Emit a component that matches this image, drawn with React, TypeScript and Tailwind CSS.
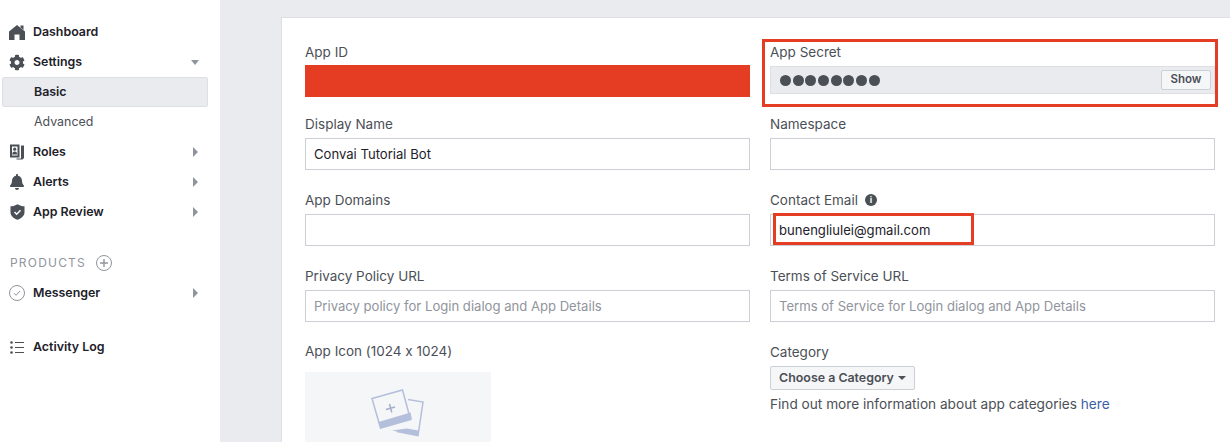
import { FaBell, FaCog } from 'react-icons/fa';

function CaretRight() {
  return <span className="h-0 w-0 border-y-[5px] border-l-[5px] border-y-transparent border-l-[#90949c]" />;
}

function CaretDown() {
  return <span className="h-0 w-0 border-x-[4.5px] border-t-[5px] border-x-transparent border-t-[#90949c]" />;
}

function HomeIcon() {
  return (
    <svg width="16" height="15" viewBox="0 0 16 15" fill="#4b4f56">
      <path d="M8 0l8 6.500V15h-5.500V9.500h-5V15H0V6.500z" />
      <path d="M11.500.5h3v4.500l-3-2.500z" />
    </svg>
  );
}

function RolesIcon() {
  return (
    <svg width="16" height="16" viewBox="0 0 16 16" fill="#4b4f56">
      <path d="M1 .5h9.500v13H1zM3 2.500v9h5.500v-9z" fillRule="evenodd" />
      <circle cx="5.700" cy="5.200" r="1.600" />
      <path d="M3.200 10.500c0-2 1-3 2.500-3s2.500 1 2.500 3z" />
      <path d="M12 1.500h3v12.500l-1.500 1.500H7.500v-1h4.500z" />
    </svg>
  );
}

function ShieldIcon() {
  return (
    <svg width="15" height="16" viewBox="0 0 15 16">
      <path d="M7.500.2C9.500 1.500 12 2.200 14.500 2.300v6c0 3.500-3 6-7 7.500-4-1.500-7-4-7-7.500v-6C3 2.200 5.500 1.500 7.500.2z" fill="#4b4f56" />
      <path d="M4.500 8l2.200 2.200 3.800-4" fill="none" stroke="#fff" strokeWidth="1.500" />
    </svg>
  );
}

function CheckCircle() {
  return (
    <svg width="16" height="16" viewBox="0 0 16 16" fill="none" stroke="#90949c">
      <circle cx="8" cy="8" r="7.500" />
      <path d="M5 8.200l2.100 2.100 4-4.300" />
    </svg>
  );
}

function ListIcon() {
  return (
    <svg width="14" height="13" viewBox="0 0 14 13" fill="#4b4f56">
      <circle cx="1.500" cy="1.500" r="1.300" />
      <circle cx="1.500" cy="6.500" r="1.300" />
      <circle cx="1.500" cy="11.500" r="1.300" />
      <path d="M5 1h9v1.100H5zM5 6h9v1.100H5zM5 11h9v1.100H5z" />
    </svg>
  );
}

function PictureIcon() {
  return (
    <svg width="54" height="50" viewBox="0 0 54 50" fill="none">
      <path d="M37 10.500l15 2.500-5 33.500-21-4" stroke="#b4bfdc" strokeWidth="1.500" />
      <path d="M21 41.500l26 5 .7-5-12-2z" fill="#b4bfdc" />
      <path d="M1 9.500L31.500 1l8 29.500L9.500 39z" stroke="#b4bfdc" strokeWidth="1.500" fill="#f5f6f7" />
      <path d="M7.500 33l32-9.500 1.500 7L9.500 39.500z" fill="#b4bfdc" />
      <path d="M15 20.500l9-2.500M18.500 15l2.300 8.500" stroke="#a3aecb" strokeWidth="1.500" />
    </svg>
  );
}

const navItems = [
  { label: 'Roles', icon: <RolesIcon /> },
  { label: 'Alerts', icon: <FaBell size={16} color="#4b4f56" /> },
  { label: 'App Review', icon: <ShieldIcon /> },
];

function NavRow({ icon, label, caret }: { icon: React.ReactNode; label: string; caret?: React.ReactNode }) {
  return (
    <div className="flex h-[30px] items-center pl-[9px] pr-[20px]">
      <span className="flex w-[16px] justify-center">{icon}</span>
      <span className="ml-[8px] flex-1 text-[12.4px] font-semibold text-[#1d2129]">{label}</span>
      <span className="flex w-[10px] justify-center">{caret}</span>
    </div>
  );
}

function Sidebar() {
  return (
    <aside className="h-[442px] w-[220px] shrink-0 bg-white pt-[17px]">
      <NavRow icon={<HomeIcon />} label="Dashboard" />
      <NavRow icon={<FaCog size={17} color="#4b4f56" />} label="Settings" caret={<CaretDown />} />
      <div className="ml-[2px] flex h-[30px] w-[206px] items-center rounded-[2px] border border-[#dddfe2] bg-[#e9ebee] pl-[31px] text-[12.4px] font-semibold text-[#1d2129]">
        Basic
      </div>
      <div className="flex h-[30px] items-center pl-[34px] text-[12.4px] text-[#4b4f56]">Advanced</div>
      {navItems.map((item) => (
        <NavRow key={item.label} icon={item.icon} label={item.label} caret={<CaretRight />} />
      ))}
      <div className="mt-[28px] flex h-[16px] items-center pl-[10px]">
        <span className="text-[12px] tracking-[1.2px] text-[#90949c]">PRODUCTS</span>
        <span className="ml-[10px] flex h-[16px] w-[16px] items-center justify-center rounded-full border border-[#90949c]">
          <svg width="8" height="8" viewBox="0 0 8 8" stroke="#90949c" strokeWidth="1.400">
            <path d="M0 4h8M4 0v8" />
          </svg>
        </span>
      </div>
      <div className="mt-[7px]">
        <NavRow icon={<CheckCircle />} label="Messenger" caret={<CaretRight />} />
      </div>
      <div className="mt-[24px]">
        <NavRow icon={<ListIcon />} label="Activity Log" />
      </div>
    </aside>
  );
}

function Label({ children }: { children: React.ReactNode }) {
  return <div className="text-[13.5px] leading-[20px] text-[#4b4f56]">{children}</div>;
}

function TextField({ value, placeholder }: { value?: string; placeholder?: string }) {
  return (
    <div className="mt-[4px] flex h-[32px] items-center border border-[#ccd0d5] bg-white px-[8px] pt-[1px] text-[13.1px]">
      {value ? <span className="text-[#1d2129]">{value}</span> : <span className="text-[#90949c]">{placeholder}</span>}
    </div>
  );
}

function Field({ label, value, placeholder }: { label: string; value?: string; placeholder?: string }) {
  return (
    <div>
      <Label>{label}</Label>
      <TextField value={value} placeholder={placeholder} />
    </div>
  );
}

export default function App() {
  return (
    <div className="flex h-[442px] w-[1230px] overflow-hidden bg-[#e9ebee] font-['Inter',sans-serif] [font-feature-settings:'calt'_0]">
      <Sidebar />
      <main className="ml-[61px] mt-[17px] flex-1 border-l border-t border-[#dddfe2] bg-white pl-[23px] pr-[15px] pt-[24px]">
        <div className="grid grid-cols-[445px_445px] gap-x-[20px] gap-y-[20px]">
          <div>
            <Label>App ID</Label>
            <div className="mt-[3px] h-[32px] bg-[#e53d23]" />
          </div>
          <div className="relative">
            <Label>App Secret</Label>
            <div className="mt-[4px] flex h-[28px] items-center justify-between border border-[#dddfe2] bg-[#e9ebee] pl-[9px] pr-[3px]">
              <span className="flex gap-[1.700px]">
                {[0, 1, 2, 3, 4, 5, 6, 7].map((dot) => (
                  <span key={dot} className="h-[11px] w-[11px] rounded-full bg-[#4b4f56]" />
                ))}
              </span>
              <span className="flex h-[20px] w-[50px] items-center justify-center rounded-[2px] border border-[#ccd0d5] bg-[#f5f6f7] text-[11.5px] font-semibold text-[#4b4f56]">
                Show
              </span>
            </div>
            <div className="absolute left-[-8px] top-[-3px] h-[68px] w-[456px] border-[3px] border-[#e53d23]" />
          </div>

          <div className="-mt-[3px]">
            <Field label="Display Name" value="Convai Tutorial Bot" />
          </div>
          <div className="-mt-[3px]">
            <Field label="Namespace" />
          </div>

          <Field label="App Domains" />
          <div className="relative">
            <div className="flex items-center gap-[7px]">
              <Label>Contact Email</Label>
              <span className="flex h-[12px] w-[12px] items-center justify-center rounded-full bg-[#4b4f56] text-[9px] font-bold text-white">
                i
              </span>
            </div>
            <TextField value="bunengliulei@gmail.com" />
            <div className="absolute left-[3px] top-[23px] h-[32px] w-[201px] border-[3px] border-[#e53d23]" />
          </div>

          <Field label="Privacy Policy URL" placeholder="Privacy policy for Login dialog and App Details" />
          <Field label="Terms of Service URL" placeholder="Terms of Service for Login dialog and App Details" />

          <div className="-mt-[1px]">
            <Label>App Icon (1024 x 1024)</Label>
            <div className="mt-[11px] flex h-[70px] w-[186px] items-start justify-center bg-[#f5f6f7] pt-[17px]">
              <PictureIcon />
            </div>
          </div>
          <div>
            <Label>Category</Label>
            <div className="mt-[4px] flex h-[24px] w-[145px] items-center justify-center gap-[4px] rounded-[2px] border border-[#ccd0d5] bg-[#f5f6f7] text-[12.4px] font-semibold text-[#4b4f56]">
              Choose a Category
              <span className="h-0 w-0 border-x-[4px] border-t-[4px] border-x-transparent border-t-[#4b4f56]" />
            </div>
            <div className="mt-[4px] text-[13.65px] leading-[20px] text-[#4b4f56]">
              Find out more information about app categories <span className="text-[#3b5fa8]">here</span>
            </div>
          </div>
        </div>
      </main>
    </div>
  );
}
